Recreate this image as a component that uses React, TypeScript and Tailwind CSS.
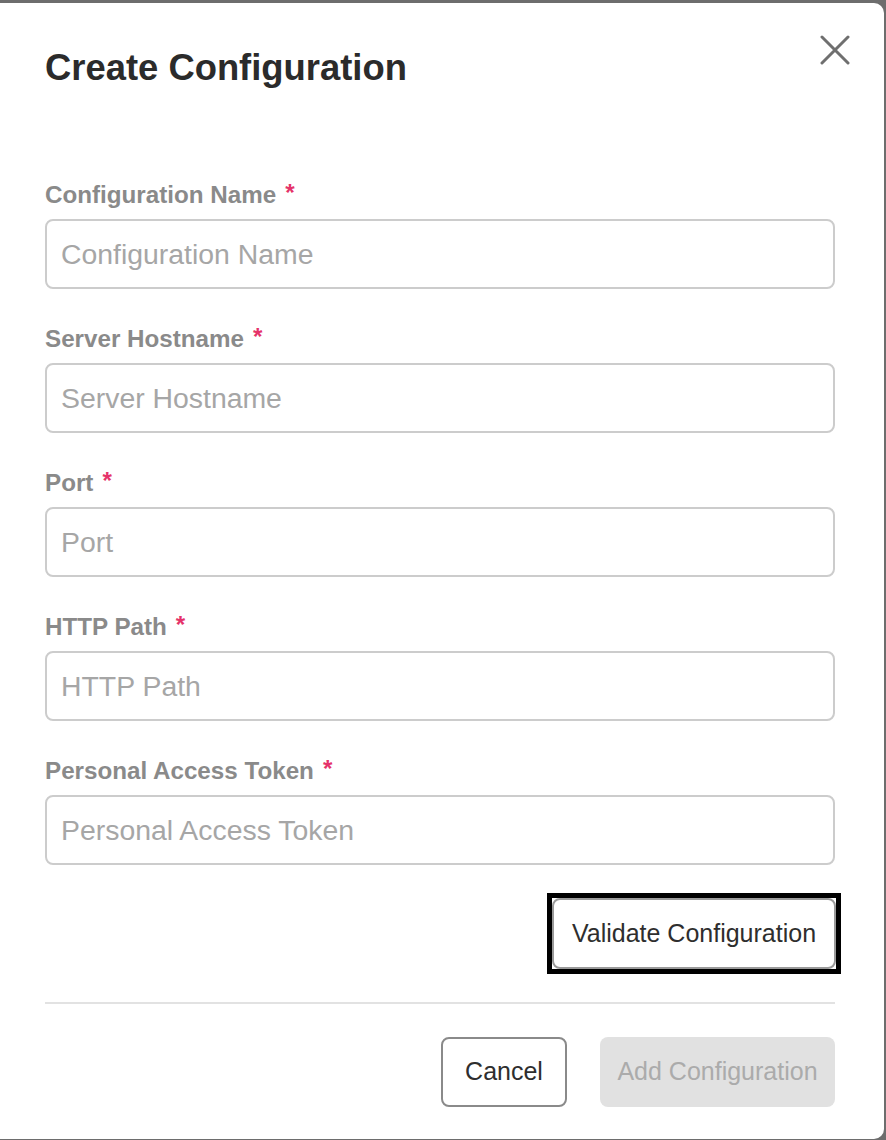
import React from "react";

const font = { fontFamily: '"Liberation Sans", Arial, Helvetica, sans-serif' };

function Field({ label }: { label: string }) {
  return (
    <div className="flex flex-col">
      <div className="flex items-start h-[24px] text-[24.2px] leading-[24px] font-bold text-[#8a8a8a]">
        <span>{label}</span>
        <span className="ml-[9px] text-[#e5336a] relative -top-[2px]">*</span>
      </div>
      <input
        placeholder={label}
        className="mt-[12px] h-[70px] w-full rounded-[8px] border-2 border-[#cccccc] bg-white px-[14px] text-[28.4px] text-[#333] placeholder:text-[#a6a6a6] outline-none"
        style={font}
      />
    </div>
  );
}

export default function App() {
  return (
    <div className="min-h-[1140px] w-[886px] bg-[#6d6d6d] pt-[3px]" style={font}>
      <div className="w-[884px] h-[1136px] bg-white rounded-r-[10px] pl-[45px] pr-[49px] pt-[46px] flex flex-col">
        <div className="flex items-start justify-between">
          <h1 className="text-[36.4px] leading-[36px] font-bold text-[#2b2b2b] mt-[1px]">Create Configuration</h1>
          <button className="-mr-[15px] -mt-[14px] w-[30px] h-[30px] flex items-center justify-center">
            <svg width="30" height="30" viewBox="0 0 30 30" fill="none">
              <path d="M2 2 L28 28 M28 2 L2 28" stroke="#6f6f6f" strokeWidth="3" strokeLinecap="round" />
            </svg>
          </button>
        </div>
        <div className="mt-[97px] flex flex-col gap-[38px]">
          <Field label="Configuration Name" />
          <Field label="Server Hostname" />
          <Field label="Port" />
          <Field label="HTTP Path" />
          <Field label="Personal Access Token" />
        </div>
        <div className="mt-[28px] flex justify-end -mr-[6px]">
          <div className="border-[5px] border-black">
            <button className="h-[71px] w-[284px] rounded-[8px] border-2 border-[#9a9a9a] bg-white text-[25px] text-[#2e2e2e]">
              Validate Configuration
            </button>
          </div>
        </div>
        <div className="mt-[28px] h-[2px] bg-[#e2e2e2]" />
        <div className="mt-[33px] flex justify-end gap-[33px]">
          <button className="h-[70px] w-[126px] rounded-[8px] border-2 border-[#8a8a8a] bg-white text-[25px] text-[#2e2e2e]">
            Cancel
          </button>
          <button className="h-[70px] w-[235px] rounded-[8px] bg-[#e1e1e1] text-[25px] text-[#ababab]">
            Add Configuration
          </button>
        </div>
      </div>
    </div>
  );
}
